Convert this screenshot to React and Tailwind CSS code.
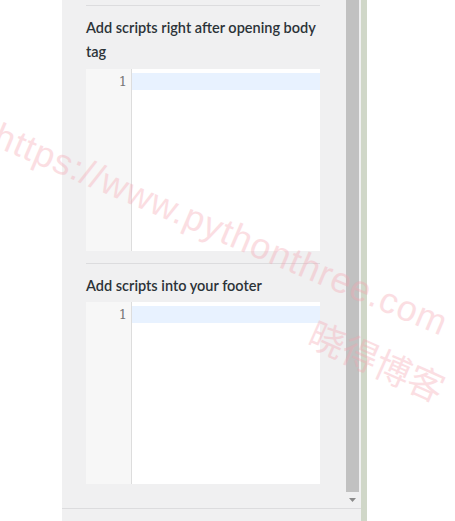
const Editor = () => (
  <div className="flex h-[182px] w-full bg-white">
    <div className="w-[46px] shrink-0 border-r border-[#dddddd] bg-[#f7f7f7] pt-[4px]">
      <div className="h-[17px] pr-[4px] text-right text-[13px] leading-[17px] text-[#777777] [font-family:'DejaVu_Serif',serif]">
        1
      </div>
    </div>
    <div className="flex-1 pt-[4px]">
      <div className="h-[17px] bg-[#e8f2ff]"></div>
    </div>
  </div>
);

export default function App() {
  return (
    <div className="relative flex h-[521px] w-[455px] overflow-hidden bg-white [font-family:Lato,sans-serif]">
      <div className="w-[62px] shrink-0"></div>

      <div className="flex w-[299px] shrink-0 flex-col bg-[#f0f0f1]">
        <div className="flex h-[508px]">
          <div className="w-[284px] pl-[24px] pr-[24px]">
            <div className="mt-[5px] w-[234px] border-t border-[#dcdcde]"></div>
            <h2 className="mt-[10px] text-[14.5px] font-semibold leading-[24px] text-[#2c3338]">
              Add scripts right after opening body tag
            </h2>
            <div className="mt-[5px] w-[234px]">
              <Editor />
            </div>
            <div className="mt-[12px] w-[234px] border-t border-[#dcdcde]"></div>
            <h2 className="mt-[10px] text-[14.5px] font-semibold leading-[24px] text-[#2c3338]">
              Add scripts into your footer
            </h2>
            <div className="mt-[4px] w-[234px]">
              <Editor />
            </div>
          </div>
          <div className="flex w-[15px] flex-col items-start">
            <div className="h-[492px] w-[13px] bg-[#c1c1c1]"></div>
            <div className="mt-[6px] flex w-[13px] justify-center">
              <svg width="7" height="4" viewBox="0 0 7 4">
                <path d="M0 0h7L3.5 4z" fill="#8a8a8a" />
              </svg>
            </div>
          </div>
        </div>
        <div className="flex-1 border-t border-[#dcdcde] bg-[#f0f0f1]"></div>
      </div>

      <div className="w-[6px] shrink-0 bg-[#d0d7c8]"></div>
      <div className="flex-1"></div>

      <div className="pointer-events-none absolute left-[-4px] top-[110px] origin-left rotate-[23deg] whitespace-nowrap text-[36px] font-light leading-[48px] tracking-[1px] text-[#f5a3ae] opacity-35 [font-family:'Liberation_Sans',sans-serif]">
        https://www.pythonthree.com
      </div>
      <div className="pointer-events-none absolute left-[312px] top-[306px] origin-left rotate-[24deg] whitespace-nowrap text-[36px] leading-[48px] text-[#f5a3ae] opacity-35 [font-family:'Noto_Sans_CJK_SC',sans-serif]">
        晓得博客
      </div>
    </div>
  );
}
